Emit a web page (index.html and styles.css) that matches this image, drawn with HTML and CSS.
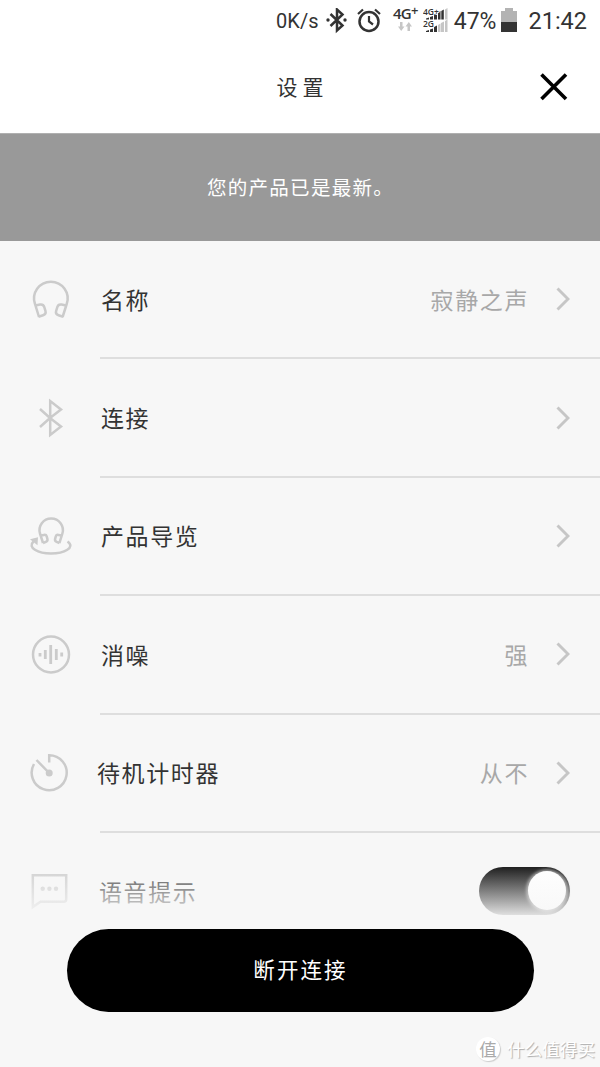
FILE: index.html
```html
<!DOCTYPE html>
<html lang="zh-CN">
<head>
    <meta charset="UTF-8"/>
    <meta name="viewport" content="width=device-width, initial-scale=1.0"/>
    <title>设置</title>
    <link rel="stylesheet" href="styles.css">
</head>
<body>
<div class="screen">
    <div class="status-bar">
        <span class="speed">0K/s</span>
        <svg class="status-bt" width="22" height="26" viewBox="0 0 22 26">
            <path d="M4.500 6l12 11.500-5.500 5V1.500l5.500 5L4.500 18" fill="none" stroke="#333" stroke-width="2.500"/>
            <circle cx="2" cy="12" r="1.700" fill="#333"/>
            <circle cx="19" cy="12" r="1.700" fill="#333"/>
        </svg>
        <svg class="status-alarm" width="24" height="26" viewBox="0 0 24 26">
            <circle cx="12" cy="13.500" r="9.500" fill="none" stroke="#333" stroke-width="2.500"/>
            <path d="M1 6l5-4.500M23 6L18 1.500M12 8V13.500l4 3" fill="none" stroke="#333" stroke-width="2.200"/>
        </svg>
        <div class="network">
            <span>4G<sup>+</sup></span>
            <svg width="14" height="9" viewBox="0 0 14 9">
                <path d="M2 0h2.500v4.500H6.500L3.200 9 0 4.500h2zM9.500 9H12V4.500h2L10.800 0 7.500 4.500h2z" fill="#c6c6c6"/>
            </svg>
        </div>
        <svg class="signal" width="25" height="26" viewBox="0 0 25 26">
            <path d="M22 1.500L24.500 0v11.500H22zM18 15l3-1.500V24h-3zM22 13l2.500-1.500V24H22zM15 17l2.500-1.500V24H15z" fill="#c6c6c6"/>
            <path d="M3 10.500l3-1v2H3zM7 9l3-1v3.500H7zM11 6.500l3-1.500v6.500h-3zM15 4.500l2.500-1.500v8.500H15zM18.300 3l2.500-1.500v10h-2.500zM3 23l3-1v2H3zM7 21.500l3-1V24H7zM11 19l3-1.500V24h-3z" fill="#333"/>
            <text x="0" y="7">4G+</text>
            <text x="0" y="19">2G</text>
        </svg>
        <span class="percent">47%</span>
        <svg class="battery" width="16" height="24" viewBox="0 0 16 24">
            <path d="M4 0h8v3h4v11H0V3h4z" fill="#b3b3b3"/>
            <path d="M0 14h16v10H0z" fill="#333"/>
        </svg>
        <span class="clock">21:42</span>
    </div>

    <header class="header">
        <h1>设置</h1>
        <button class="close" aria-label="关闭">
            <svg width="28" height="28" viewBox="0 0 28 28">
                <path d="M1.500 1.500l24.500 24.500M26 1.500L1.500 26" stroke="#000" stroke-width="3.600"/>
            </svg>
        </button>
    </header>

    <div class="banner">您的产品已是最新。</div>

    <ul class="list">
        <li class="row">
            <svg class="icon" viewBox="0 0 60 60">
                <path d="M19 47L15 34A16.800 16.800 0 1 1 46.700 34L42.600 47"/>
                <path d="M15.500 35.500l4.500-.9c2.300-.4 3.700.6 4.300 2.500l1.200 4c.6 2.100-.4 3.500-2.400 4.100L18.500 46.700M46.100 35.500l-4.500-.9c-2.300-.4-3.700.6-4.300 2.500l-1.200 4c-.6 2.100.4 3.500 2.400 4.100l4.600 1.500"/>
            </svg>
            <div class="content">
                <span class="label">名称</span>
                <span class="value">寂静之声</span>
                <svg class="chevron" viewBox="0 0 14 24"><path d="M1.500 1.500L12 12 1.500 22.500"/></svg>
            </div>
        </li>
        <li class="row">
            <svg class="icon" viewBox="0 0 60 60">
                <path d="M20 20l10 9 11 8.500L30.200 46v-34L41 20.500 30 29l-10 9"/>
            </svg>
            <div class="content">
                <span class="label">连接</span>
                <svg class="chevron" viewBox="0 0 14 24"><path d="M1.500 1.500L12 12 1.500 22.500"/></svg>
            </div>
        </li>
        <li class="row">
            <svg class="icon" viewBox="0 0 60 60">
                <path d="M23 36l-3-9.500A11.700 11.700 0 1 1 42.400 26.500L39.400 36"/>
                <path d="M20.500 28.500l3.600-.6c1.500-.2 2.300.4 2.600 1.500l.7 2.500c.4 1.500-.2 2.400-1.500 2.900L23 36M42 28.500l-3.600-.6c-1.500-.2-2.300.4-2.600 1.500l-.7 2.500c-.4 1.500.2 2.400 1.500 2.900l2.900 1.200"/>
                <path d="M13.500 34.500C7 40.500 18 46.500 31 46.500s25-6 16.500-12"/>
                <path class="solid" d="M10 32.300l8-2-.5 8z"/>
            </svg>
            <div class="content">
                <span class="label">产品导览</span>
                <svg class="chevron" viewBox="0 0 14 24"><path d="M1.500 1.500L12 12 1.500 22.500"/></svg>
            </div>
        </li>
        <li class="row">
            <svg class="icon" viewBox="0 0 60 60">
                <circle cx="31" cy="29.500" r="18"/>
                <path class="bars" d="M20 28v3.500M25.300 25v9M30.700 20v19M36.300 24v11M41.700 27.500v4"/>
            </svg>
            <div class="content">
                <span class="label">消噪</span>
                <span class="value">强</span>
                <svg class="chevron" viewBox="0 0 14 24"><path d="M1.500 1.500L12 12 1.500 22.500"/></svg>
            </div>
        </li>
        <li class="row">
            <svg class="icon" viewBox="0 0 60 60">
                <path d="M29.200 18.500v-7.300A17.500 17.500 0 1 1 14 20M16.500 16l12.700 13"/>
                <circle class="solid" cx="29.200" cy="29" r="3.500"/>
            </svg>
            <div class="content">
                <span class="label label-timer">待机计时器</span>
                <span class="value">从不</span>
                <svg class="chevron" viewBox="0 0 14 24"><path d="M1.500 1.500L12 12 1.500 22.500"/></svg>
            </div>
        </li>
        <li class="row">
            <svg class="icon" viewBox="0 0 60 60">
                <path d="M12.800 45V13.200h33.400v24q0 2.500-2.500 2.500H20.500z"/>
                <g class="solid">
                    <circle cx="22.700" cy="26.700" r="2.200"/>
                    <circle cx="29.400" cy="26.700" r="2.200"/>
                    <circle cx="36" cy="26.700" r="2.200"/>
                </g>
            </svg>
            <div class="content">
                <span class="label label-voice">语音提示</span>
                <span class="toggle"><span class="knob"></span></span>
            </div>
        </li>
    </ul>

    <!-- stays over the list, which fades out behind it -->
    <div class="footer">
        <button class="disconnect">断开连接</button>
        <div class="watermark">
            <span class="badge">值</span>
            <span>什么值得买</span>
        </div>
    </div>
</div>
</body>
</html>
```

FILE: styles.css
```css
* {
    box-sizing: border-box;
}

body {
    margin: 0;
    font-family: "Noto Sans CJK SC", sans-serif;
    background-color: #f7f7f7;
    color: #333;
}

button {
    border: 0;
    padding: 0;
    font-family: inherit;
    cursor: pointer;
}

.screen {
    position: relative;
    height: 1067px;
    overflow: hidden;
}

.status-bar {
    display: flex;
    align-items: center;
    height: 41px;
    padding-right: 13px;
    justify-content: flex-end;
    background: #fff;
    font-family: Roboto, sans-serif;
    font-size: 23px;
    line-height: 39px;
}

.speed,
.percent,
.clock {
    padding-top: 2px;
}

.speed {
    font-size: 20px;
    letter-spacing: 0.1px;
    margin-right: 7px;
}

.status-bt {
    margin-right: 9px;
}

.status-alarm {
    margin-right: 12px;
}

.network {
    display: flex;
    flex-direction: column;
    align-items: center;
    gap: 1px;
    width: 25px;
    margin-right: 5px;
    padding-bottom: 5px;
    font: 600 15px/16px "Open Sans", sans-serif;
    letter-spacing: -0.8px;
}

.network sup {
    font-size: 13px;
    line-height: 0;
    vertical-align: 4px;
}

.signal {
    margin-right: 6px;
}

.signal text {
    font: 600 8.5px "Open Sans", sans-serif;
    fill: #333;
    stroke: #fff;
    stroke-width: 1.5px;
    paint-order: stroke;
}

.percent {
    margin-right: 5px;
}

.battery {
    margin-right: 11px;
    margin-bottom: 1px;
}

.clock {
    font-size: 23.5px;
}

.header {
    display: grid;
    grid-template-columns: 60px 1fr 60px;
    align-items: center;
    height: 92px;
    background: #fff;
}

.header h1 {
    grid-column: 2;
    margin: 0;
    padding: 0 0 2px 5px;
    font-size: 21px;
    font-weight: 400;
    letter-spacing: 5px;
    text-align: center;
}

.close {
    width: 28px;
    height: 28px;
    background: none;
}

.banner {
    height: 108px;
    padding-left: 1px;
    border-top: 1px solid #b0b0b0;
    background: #999;
    color: #fff;
    font-size: 19.5px;
    line-height: 105px;
    letter-spacing: 1.3px;
    text-align: center;
}

.list {
    margin: 0;
    padding: 0;
    list-style: none;
}

.row {
    display: flex;
    align-items: center;
    height: 118.4px;
    padding-left: 20px;
}

.icon {
    width: 60px;
    height: 60px;
    margin-right: 20px;
    fill: none;
    stroke: #cbcbcb;
    stroke-width: 2.5;
}

.icon .solid {
    fill: #cbcbcb;
    stroke: none;
}

.icon .bars {
    stroke-width: 2.8;
}

.content {
    display: flex;
    flex: 1;
    align-items: center;
    height: 100%;
    padding-right: 30px;
    border-bottom: 2px solid #dedede;
}

.label,
.value {
    padding-bottom: 1px;
    font-size: 23px;
    letter-spacing: 1.6px;
}

.label {
    flex: 1;
    margin-left: 1px;
}

.label-timer {
    margin-left: -3px;
}

.label-voice {
    margin-left: -1px;
}

.value {
    margin-right: 27px;
    color: #a8a8a8;
}

.chevron {
    width: 14px;
    height: 24px;
    fill: none;
    stroke: #c6c6c6;
    stroke-width: 2.9;
}

.toggle {
    display: flex;
    align-items: center;
    justify-content: flex-end;
    width: 91px;
    height: 48px;
    padding: 0 4px 1px 0;
    border-radius: 24px;
    background: #000;
}

.knob {
    width: 38px;
    height: 39px;
    border-radius: 50%;
    background: #fff;
    box-shadow: 0 0 3px 2px #777;
}

.footer {
    position: absolute;
    left: 0;
    right: 0;
    bottom: 0;
    display: flex;
    flex-direction: column;
    height: 212px;
    padding-top: 74px;
    background: linear-gradient(rgba(247, 247, 247, 0) 4px, #f7f7f7 66px);
}

.disconnect {
    align-self: center;
    width: 467px;
    height: 83px;
    padding: 0 0 4px 1px;
    border-radius: 42px;
    background: #000;
    color: #fff;
    font-size: 21.5px;
    letter-spacing: 2.1px;
}

.watermark {
    display: flex;
    align-items: center;
    justify-content: flex-end;
    gap: 7px;
    margin-top: 24px;
    padding-right: 5px;
    color: #fff;
    font-size: 17.6px;
    line-height: 26px;
    text-shadow: 1px 1px 1px #aaa;
}

.badge {
    width: 24px;
    height: 24px;
    border-radius: 50%;
    background: #fff;
    box-shadow: 1px 1px 1px #ccc;
    color: #aaa;
    line-height: 23px;
    text-align: center;
    text-shadow: none;
}
```
